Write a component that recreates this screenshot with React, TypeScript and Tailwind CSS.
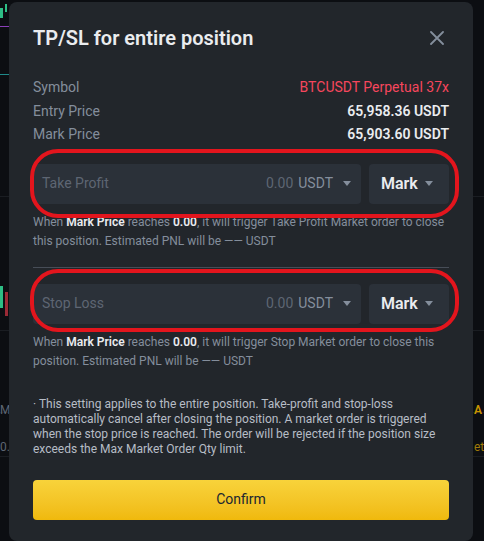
import React from 'react';

const Caret = () => (
  <svg width="8" height="5" viewBox="0 0 8 5" className="shrink-0">
    <path d="M0 0 L8 0 L4 5 Z" fill="#848e9c" />
  </svg>
);

const InfoRow = ({ label, value, red }: { label: string; value: string; red?: boolean }) => (
  <div className="flex items-center justify-between leading-[23.5px] text-[14px]">
    <span className="text-[#848e9c]">{label}</span>
    <span className={red ? 'text-[#f6465d]' : 'text-[#eaecef] font-semibold'}>{value}</span>
  </div>
);

const PriceInput = ({ label, ringClass }: { label: string; ringClass: string }) => (
  <div className="relative flex gap-2">
    <div className="flex h-10 flex-1 items-center rounded bg-[#2b3139] pl-[9px] pr-[10px] text-[14px]">
      <span className="flex-1 text-[#5e6673]">{label}</span>
      <span className="text-[#5e6673]">0.00</span>
      <span className="ml-[5px] mr-[10px] text-[#848e9c]">USDT</span>
      <Caret />
    </div>
    <div className="flex h-10 w-[80px] items-center justify-between rounded bg-[#2b3139] pl-[12px] pr-[16px]">
      <span className="text-[16px] font-semibold text-[#eaecef]">Mark</span>
      <Caret />
    </div>
    <div className={`pointer-events-none absolute rounded-[28px] border-[4px] border-[#e3151d] ${ringClass}`} />
  </div>
);

const Helper = ({ order, second }: { order: string; second: string }) => (
  <p className="text-[12px] leading-[19px] text-[#848e9c]">
    When <b className="font-semibold text-[#eaecef]">Mark Price</b> reaches{' '}
    <b className="font-semibold text-[#eaecef]">0.00</b>, it will trigger {order}
    <br />
    {second}
  </p>
);

export default function App() {
  return (
    <div
      className="relative h-[541px] w-[484px] overflow-hidden bg-[#0c0e12] pl-[9px] pt-[2px]"
      style={{ fontFamily: 'Roboto, "Noto Sans", sans-serif' }}
    >
      {/* chart behind the dialog */}
      <div className="absolute left-0 top-[8px] h-[10px] w-[3px] bg-[#2ebd85]" />
      <div className="absolute left-[5px] top-[4px] h-[8px] w-[2px] bg-[#2ebd85]" />
      <div className="absolute left-0 top-[26px] h-[1px] w-[9px] bg-[#8a3fb8]" />
      <div className="absolute left-0 top-[74px] h-[1px] w-[9px] bg-[#1f8a8a]" />
      <div className="absolute left-0 top-[196px] h-[1px] w-full bg-[#1a1d22]" />
      <div className="absolute left-0 top-[330px] h-[1px] w-full bg-[#1a1d22]" />
      <div className="absolute left-0 top-[412px] h-[1px] w-full bg-[#1a1d22]" />
      <div className="absolute left-0 top-[456px] h-[1px] w-full bg-[#1a1d22]" />
      <div className="absolute left-0 top-[286px] h-[22px] w-[3px] bg-[#2ebd85]" />
      <div className="absolute left-[5px] top-[292px] h-[24px] w-[3px] bg-[#9b2a36]" />
      <span className="absolute left-0 top-[401px] text-[12px] text-[#5e6673]">M</span>
      <span className="absolute left-0 top-[438px] text-[12px] text-[#5e6673]">0.3</span>
      <span className="absolute left-[474px] top-[401px] text-[12px] font-semibold text-[#c99400]">A</span>
      <span className="absolute left-[474px] top-[438px] text-[12px] text-[#a07a08]">et</span>

      <div className="relative flex h-[539px] w-[464px] flex-col rounded-lg bg-[#22262b] px-6 pt-[22px]">
        <div className="flex h-7 items-center justify-between">
          <h1 className="text-[20px] font-semibold text-[#eaecef]">TP/SL for entire position</h1>
          <svg width="14" height="14" viewBox="0 0 14 14" className="mr-[5px]">
            <path d="M1 1 L13 13 M13 1 L1 13" stroke="#848e9c" strokeWidth="1.8" strokeLinecap="round" />
          </svg>
        </div>

        <div className="mt-[24px]">
          <InfoRow label="Symbol" value="BTCUSDT Perpetual 37x" red />
          <InfoRow label="Entry Price" value="65,958.36 USDT" />
          <InfoRow label="Mark Price" value="65,903.60 USDT" />
        </div>

        <div className="mt-[17px]">
          <PriceInput label="Take Profit" ringClass="-left-[3px] -right-[10px] -top-[15px] -bottom-[14px]" />
        </div>
        <div className="mt-[9px]">
          <Helper order="Take Profit Market order to close" second="this position. Estimated PNL will be —— USDT" />
        </div>

        <div className="mt-[16px] h-px bg-[#474d57]" />

        <div className="mt-[16px]">
          <PriceInput label="Stop Loss" ringClass="-left-[3px] -right-[10px] -top-[15px] -bottom-[8px]" />
        </div>
        <div className="mt-[9px]">
          <Helper order="Stop Market order to close this" second="position. Estimated PNL will be —— USDT" />
        </div>

        <p className="mt-[26px] text-[12px] leading-[15px] text-[#b7bdc6]">
          · This setting applies to the entire position. Take-profit and stop-loss
          <br />
          automatically cancel after closing the position. A market order is triggered
          <br />
          when the stop price is reached. The order will be rejected if the position size
          <br />
          exceeds the Max Market Order Qty limit.
        </p>

        <button className="mt-[23px] h-10 w-full rounded bg-gradient-to-b from-[#f8d33a] to-[#f0b90b] text-[14px] font-normal text-[#202630]">
          Confirm
        </button>
      </div>
    </div>
  );
}
